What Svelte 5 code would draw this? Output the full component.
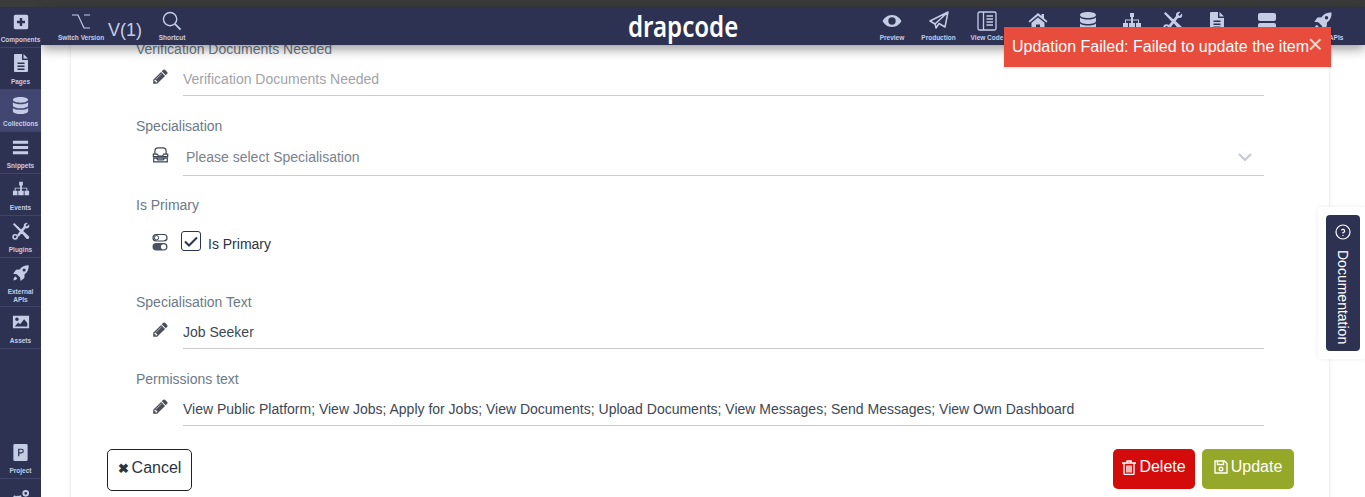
<script>
  const ic = {
    plus: 'M3 1h14a2 2 0 0 1 2 2v14a2 2 0 0 1-2 2H3a2 2 0 0 1-2-2V3a2 2 0 0 1 2-2zm5.500 4v3.500H5v3h3.500V15h3v-3.500H15v-3h-3.500V5z',
    file: 'M4 1h7v6h6v11a1 1 0 0 1-1 1H4a1 1 0 0 1-1-1V2a1 1 0 0 1 1-1zm8.500 0L17 5.500h-4.500zM6.500 9.500v1.500h7V9.500zm0 3v1.500h7v-1.500zm0 3V17h7v-1.500z',
    db: 'M10 1c4.500 0 8 1.300 8 3s-3.500 3-8 3-8-1.300-8-3 3.500-3 8-3zM2 6.500C3.500 8 6.500 8.600 10 8.600s6.500-.6 8-2.100V10c0 1.700-3.500 3-8 3s-8-1.300-8-3zm0 6C3.500 14 6.500 14.600 10 14.600s6.500-.6 8-2.100V16c0 1.700-3.500 3-8 3s-8-1.300-8-3z',
    bars: 'M2 3h16v3H2zm0 5.500h16v3H2zM2 14h16v3H2z',
    sitemap: 'M8 2h4v4h-1v2.500h6V12h2v5h-5v-5h2V9.500h-5V12h2v5H7v-5h2V9.500H4V12h2v5H1v-5h2V8.500h6V6H8z',
    tools: 'M1 2.500L2.500 1l9 8.500-2 2zM10.500 12l2-2 6.500 6q.5 1-.5 2.500-1.500 1-2.500 0zM5.500 14.500L13 5l2 2-7.500 9.500zM13 5q-.5-3 2-4 1.500-.5 2.500 0L15 3.500 16.500 5 19 2.500q.5 1.500 0 3-1 2-4 1.500zM.3 16.500a3.200 3.200 0 1 0 6.400 0a3.200 3.200 0 1 0-6.400 0zM2 16.500a1.500 1.500 0 1 1 3 0a1.500 1.500 0 1 1-3 0z',
    rocket: 'M18.500 1.500c.3 4-1 7.500-4.500 10l-.3 4L9.500 19l-.5-4-3.700-3.700-4-.5 3.200-4.300 4-.3c2.500-3.500 6-4.800 10-4.700zM13.500 5a1.700 1.700 0 1 0 0 3.400 1.700 1.700 0 0 0 0-3.400zM4 14c-1.500.5-2.200 1.800-2.300 4 2.200-.1 3.500-.8 4-2.300z',
    image: 'M1 3h18v14H1zm4.500 2a2 2 0 1 0 0 4 2 2 0 0 0 0-4zM3 15h14v-4l-3.500-4L9 12.500 7 10.500z',
    eye: 'M10 4c4.500 0 7.800 3 9.500 6-1.700 3-5 6-9.500 6S2.200 13 .5 10C2.200 7 5.500 4 10 4zm0 2.300a3.700 3.700 0 1 0 0 7.400 3.700 3.700 0 0 0 0-7.400z',
    home: 'M10 2l3.500 3V3H16v4.300l3.500 3-1.200 1.200L10 4.700l-8.300 6.800L.5 10.300zM10 6.500l6.500 5.300V18H12v-4.500H8V18H3.500v-6.200z',
    server: 'M3 2h14a2 2 0 0 1 2 2v4a2 2 0 0 1-2 2H3a2 2 0 0 1-2-2V4a2 2 0 0 1 2-2zm0 10h14a2 2 0 0 1 2 2v2a2 2 0 0 1-2 2H3a2 2 0 0 1-2-2v-2a2 2 0 0 1 2-2z',
    gears: 'M7 6l1.500.4 1-1 1.600 1-.4 1.400 1 1 1.400-.2.5 1.800-1.200.8v1.400l1.200.8-.5 1.800-1.400-.2-1 1 .4 1.400-1.600 1-1-1H6l-1 1-1.600-1 .4-1.400-1-1-1.400.2L0 13.600l1.200-.8v-1.400L0 10.600l.4-1.800 1.400.2 1-1-.4-1.400L4 5.600l1 1zm.3 4a2.200 2.200 0 1 0 0 4.400 2.200 2.200 0 0 0 0-4.400zM15.500 0a3.500 3.500 0 1 1 0 7 3.500 3.500 0 0 1 0-7zm0 2a1.500 1.500 0 1 0 0 3 1.500 1.500 0 0 0 0-3z'
  };
  const pencil = 'M491 1536l91-91-235-235-91 91v107h128v128h107zm523-928q0-22-22-22-10 0-17 7l-542 542q-7 7-7 17 0 22 22 22 10 0 17-7l542-542q7-7 7-17zm-54-192l416 416-832 832h-416v-416zm683 96q0 53-37 90l-166 166-416-416 166-165q36-38 90-38 53 0 91 38l235 234q37 39 37 91z';

  const side = [
    { label: 'Pages', icon: 'file', size: 20 },
    { label: 'Collections', icon: 'db', size: 19, on: true },
    { label: 'Snippets', icon: 'bars', size: 19 },
    { label: 'Events', icon: 'sitemap', size: 18 },
    { label: 'Plugins', icon: 'tools', size: 18 },
    { label: 'External APIs', icon: 'rocket', size: 18, tall: true },
    { label: 'Assets', icon: 'image', size: 18 }
  ];

  const topRight = [
    { label: 'Preview', icon: 'eye', w: 46 },
    { label: 'Production', icon: 'plane', w: 47 },
    { label: 'View Code', icon: 'book', w: 50 },
    { label: '', icon: 'home', w: 52 },
    { label: '', icon: 'db', w: 47 },
    { label: '', icon: 'sitemap', w: 42 },
    { label: '', icon: 'tools', w: 40 },
    { label: '', icon: 'file', w: 47 },
    { label: '', icon: 'server', w: 54 },
    { label: 'External APIs', icon: 'rocket', w: 57 }
  ];
</script>

<div class="page">
  <div class="chrome"></div>

  <div class="shell">
    <aside class="side">
      <div class="side-item first">
        <svg width="16" height="16" viewBox="0 0 20 20"><path d={ic.plus} /></svg>
        <span>Components</span>
      </div>
      {#each side as s}
        <div class="side-item" class:on={s.on} class:tall={s.tall}>
          <svg width={s.size} height={s.size} viewBox="0 0 20 20"><path d={ic[s.icon]} /></svg>
          <span>{s.label}</span>
        </div>
      {/each}
      <div class="side-spacer"></div>
      <div class="side-item">
        <svg width="19" height="19" viewBox="0 0 20 20"><path fill-rule="evenodd" d="M4 1h12a1.500 1.500 0 0 1 1.500 1.500v15A1.500 1.500 0 0 1 16 19H4a1.500 1.500 0 0 1-1.500-1.500v-15A1.500 1.500 0 0 1 4 1zm3.500 5v8h1.300v-3h2.200a2.500 2.500 0 0 0 0-5zm1.300 1.200H11a1.300 1.300 0 0 1 0 2.600H8.800z" /></svg>
        <span>Project</span>
      </div>
      <div class="side-item gears">
        <svg width="19" height="19" viewBox="0 0 20 20"><path d={ic.gears} /></svg>
      </div>
    </aside>

    <div class="right">
      <header class="top">
        <div class="top-left">
          <div class="top-item switch">
            <svg class="line" width="20" height="20" viewBox="0 0 20 20" stroke="#c5cde6" stroke-width="1.200"><path d="M1 4h6l6 13h6M13 4h6" /></svg>
            <span>Switch Version</span>
          </div>
          <div class="version">V(1)</div>
          <div class="top-item shortcut">
            <svg class="line" width="20" height="20" viewBox="0 0 21 21" stroke="#c5cde6" stroke-width="1.500"><circle cx="8.500" cy="8.500" r="7" /><path d="M13.500 13.500l6 6" stroke-width="2" /></svg>
            <span>Shortcut</span>
          </div>
        </div>

        <div class="logo">drapcode</div>

        <div class="top-right">
          {#each topRight as t}
            <div class="top-item" style="width:{t.w}px">
              {#if t.icon === 'plane'}
                <svg class="line" width="20" height="20" viewBox="0 0 20 20" stroke="#c5cde6" stroke-width="1.500" stroke-linejoin="round"><path d="M19 1L1 10l5 3L19 1l-3 15-6-3.500-3 4.500-1-5" /></svg>
              {:else if t.icon === 'book'}
                <svg class="line" width="20" height="20" viewBox="0 0 20 20" stroke="#c5cde6" stroke-width="1.300"><rect x="1" y="1" width="18" height="18" rx="1.500" /><path d="M6.500 1v18M9.500 5h6.500M9.500 8h6.500M9.500 11h6.500M9.500 14h6.500" /></svg>
              {:else}
                <svg width="20" height="20" viewBox="0 0 20 20"><path d={ic[t.icon]} /></svg>
              {/if}
              {#if t.label}<span>{t.label}</span>{/if}
            </div>
          {/each}
        </div>
      </header>

      <main class="main">
        <section class="card">
          <label class="field-label first-label">Verification Documents Needed</label>
          <div class="row">
            <svg class="field-icon" width="17" height="17" viewBox="0 0 1792 1792"><path d={pencil} /></svg>
            <div class="input placeholder">Verification Documents Needed</div>
          </div>

          <label class="field-label">Specialisation</label>
          <div class="row select-row">
            <svg class="field-icon box" width="17" height="16" viewBox="0 0 20 20" stroke="#3c4454" stroke-width="1.500"><path d="M3 9V5a4 4 0 0 1 4-4h6a4 4 0 0 1 4 4v4M1 9h5l1.500 2.500h5L14 9h5v3H1zM1.500 14h17v4.500h-17zM5 14l1.500 2h7l1.500-2" /></svg>
            <div class="input select">Please select Specialisation
              <svg width="14" height="8" viewBox="0 0 14 8" fill="none" stroke="#c4c8ce" stroke-width="2"><path d="M1 1l6 6 6-6" /></svg>
            </div>
          </div>

          <label class="field-label">Is Primary</label>
          <div class="row check-row">
            <svg class="field-icon" width="16" height="18" viewBox="0 0 16 18"><rect x="1" y="1.500" width="14" height="6.500" rx="3.250" fill="none" stroke="#3c4454" stroke-width="1.200" /><circle cx="4.500" cy="4.750" r="2.200" fill="none" stroke="#3c4454" stroke-width="1" /><rect x=".5" y="10" width="15" height="7.500" rx="3.750" fill="#4b5263" /><circle cx="11.500" cy="13.750" r="2.600" fill="#fff" /></svg>
            <span class="check">
              <svg width="14" height="11" viewBox="0 0 14 11" fill="none" stroke="#2d3253" stroke-width="2"><path d="M1 5.500l4 4 8-8" /></svg>
            </span>
            <span class="check-text">Is Primary</span>
          </div>

          <label class="field-label">Specialisation Text</label>
          <div class="row">
            <svg class="field-icon" width="17" height="17" viewBox="0 0 1792 1792"><path d={pencil} /></svg>
            <div class="input">Job Seeker</div>
          </div>

          <label class="field-label">Permissions text</label>
          <div class="row">
            <svg class="field-icon" width="17" height="17" viewBox="0 0 1792 1792"><path d={pencil} /></svg>
            <div class="input">View Public Platform; View Jobs; Apply for Jobs; View Documents; Upload Documents; View Messages; Send Messages; View Own Dashboard</div>
          </div>

          <div class="actions">
            <button class="cancel"><b>✖</b> Cancel</button>
            <div class="actions-right">
              <button class="delete">
                <svg width="14" height="15" viewBox="0 0 14 15" fill="none" stroke="#fff" stroke-width="1.400"><path d="M0 3h14M5 3V1h4v2M2 3v10.500a1 1 0 0 0 1 1h8a1 1 0 0 0 1-1V3M5 5.500v7M7 5.500v7M9 5.500v7" /></svg>
                Delete
              </button>
              <button class="update">
                <svg width="14" height="14" viewBox="0 0 14 14" fill="none" stroke="#fff" stroke-width="1.400"><path d="M1 1h9.500L13 3.500V13H1zM3.500 1v3.500h6V1" /><circle cx="7" cy="9" r="1.800" /></svg>
                Update
              </button>
            </div>
          </div>
        </section>
      </main>
    </div>
  </div>

  <div class="toast">
    <span>Updation Failed: Failed to update the item</span>
    <i>×</i>
  </div>

  <div class="doc-tab">
    <div class="doc-inner">
      <svg width="16" height="16" viewBox="0 0 16 16" fill="none" stroke="#fff" stroke-width="1.200"><circle cx="8" cy="8" r="7" /><path d="M6.500 6.300A1.600 1.600 0 1 1 8 8.500v1M8 11v1" /></svg>
      <span>Documentation</span>
    </div>
  </div>
</div>

<style>
  :global(body) {
    margin: 0;
    font-family: "Liberation Sans", Arial, sans-serif;
  }
  .page {
    position: relative;
    width: 1365px;
    height: 497px;
    overflow: hidden;
    background: #fff;
    display: flex;
    flex-direction: column;
  }
  .chrome {
    height: 7px;
    background: #3b3b3b;
    flex: none;
  }
  .shell {
    display: flex;
    flex: 1;
    min-height: 0;
  }
  .side {
    width: 41px;
    flex: none;
    background: #2d3253;
    display: flex;
    flex-direction: column;
    overflow: hidden;
    z-index: 3;
  }
  .side-item {
    height: 42px;
    flex: none;
    box-sizing: border-box;
    border-bottom: 1px solid #3e4569;
    display: grid;
    grid-template-rows: 30px auto;
    justify-items: center;
    align-items: center;
    align-content: start;
  }
  .side-item.first {
    height: 41px;
    grid-template-rows: 29px auto;
  }
  .side-item.tall {
    height: 49px;
  }
  .side-item.on {
    background: #414770;
  }
  .side-item.gears {
    border-bottom: 0;
    padding-top: 5px;
  }
  .side-item svg,
  .top-item svg {
    fill: #c5cde6;
    flex: none;
  }
  .top-item svg.line {
    fill: none;
  }
  .side-item span {
    font-size: 6.500px;
    line-height: 8px;
    font-weight: 700;
    color: #c5cde6;
    text-align: center;
  }
  .side-spacer {
    height: 88px;
    flex: none;
  }
  .right {
    flex: 1;
    min-width: 0;
    display: flex;
    flex-direction: column;
  }
  .top {
    height: 38px;
    flex: none;
    background: #2d3253;
    display: flex;
    position: relative;
    z-index: 2;
    box-shadow: 0 4px 12px rgba(0, 0, 0, 0.4);
  }
  .top-left {
    display: flex;
    width: 300px;
    padding-left: 17px;
    box-sizing: border-box;
  }
  .top-item {
    display: flex;
    flex-direction: column;
    align-items: center;
    padding-top: 4px;
    gap: 3px;
    box-sizing: border-box;
    white-space: nowrap;
    justify-content: flex-start;
  }
  .top-item span {
    font-size: 6.500px;
    line-height: 8px;
    font-weight: 700;
    color: #c5cde6;
  }
  .switch {
    width: 46px;
  }
  .version {
    font-size: 18px;
    color: #c5cde6;
    line-height: 46px;
    margin-left: 4px;
    height: 38px;
  }
  .shortcut {
    width: 32px;
    margin-left: 14px;
  }
  .logo {
    width: 110px;
    margin-left: 287px;
    color: #fff;
    font-family: "Noto Sans", sans-serif;
    font-size: 29px;
    font-weight: 600;
    line-height: 38px;
    white-space: nowrap;
    transform: scaleX(0.83);
    transform-origin: left center;
  }
  .top-right {
    display: flex;
    margin-left: 131px;
  }
  .main {
    flex: 1;
    min-height: 0;
    overflow: hidden;
    padding: 0 35px 0 29px;
  }
  .card {
    box-sizing: border-box;
    height: 470px;
    border: 1px solid #f1f1f1;
    border-width: 0 1px;
    box-shadow: 0 0 4px rgba(0, 0, 0, 0.05);
    padding: 0 35px 0 65px;
    position: relative;
  }
  .field-label {
    display: block;
    font-size: 14px;
    line-height: 16px;
    color: #6c7a89;
    margin-top: 22px;
  }
  .first-label {
    margin-top: -4px;
  }
  .row {
    display: flex;
    align-items: flex-start;
    padding-left: 16px;
    margin-top: 6px;
    padding-right: 30px;
  }
  .select-row {
    margin-bottom: -1px;
  }
  .field-icon {
    flex: none;
    fill: #4b4f58;
    margin-top: 5px;
    margin-right: 14px;
  }
  .field-icon.box {
    fill: none;
    margin-top: 7px;
  }
  .input {
    flex: 1;
    min-width: 0;
    height: 33px;
    box-sizing: border-box;
    border-bottom: 1px solid #ccc;
    font-size: 14px;
    line-height: 20px;
    padding-top: 6px;
    color: #3d4754;
    white-space: nowrap;
  }
  .placeholder {
    color: #a0a3a8;
  }
  .select {
    color: #79828d;
    padding: 0 12px 2px 3px;
    display: flex;
    justify-content: space-between;
    align-items: center;
    height: 36px;
  }
  .check-row {
    height: 41px;
    margin-top: 18px;
  }
  .check-row .field-icon {
    margin-top: 2px;
    margin-right: 13px;
  }
  .check {
    width: 20px;
    height: 20px;
    box-sizing: border-box;
    border: 1.500px solid #2d3253;
    border-radius: 3px;
    display: flex;
    align-items: center;
    justify-content: center;
    flex: none;
  }
  .check-text {
    font-size: 14px;
    line-height: 16px;
    color: #2c3440;
    margin-left: 7px;
    margin-top: 5px;
  }
  .actions {
    display: flex;
    justify-content: space-between;
    align-items: flex-start;
    margin-top: 23px;
    margin-left: -29px;
  }
  .actions-right {
    display: flex;
    gap: 7px;
  }
  button {
    font-family: inherit;
    font-size: 16px;
    border-radius: 5px;
    box-sizing: border-box;
    display: flex;
    align-items: center;
    justify-content: center;
    padding: 0 0 4px;
    gap: 3px;
  }
  .cancel {
    width: 85px;
    height: 42px;
    background: #fff;
    border: 1px solid #222;
    color: #2c3440;
  }
  .cancel b {
    font-size: 13px;
  }
  .delete {
    width: 82px;
    height: 40px;
    background: #d40b0b;
    border: 0;
    color: #fff;
  }
  .update {
    width: 92px;
    height: 40px;
    background: #95a82a;
    border: 0;
    color: #fff;
  }
  .toast {
    position: absolute;
    left: 1004px;
    top: 27px;
    width: 327px;
    height: 40px;
    box-sizing: border-box;
    padding-left: 8px;
    background: #e74c3c;
    color: #fff;
    font-size: 16px;
    line-height: 39px;
    z-index: 5;
    white-space: nowrap;
    box-shadow: 0 1px 2px rgba(0, 0, 0, 0.15);
  }
  .toast i {
    position: absolute;
    right: 8px;
    top: -1px;
    font-style: normal;
    font-size: 26px;
    line-height: 36px;
    color: #f7d4cf;
  }
  .doc-tab {
    position: absolute;
    left: 1318px;
    top: 207px;
    width: 47px;
    height: 152px;
    box-sizing: border-box;
    padding: 8px 5px 8px 8px;
    background: #fff;
    border-radius: 3px 0 0 3px;
    box-shadow: 0 0 4px rgba(0, 0, 0, 0.08);
    z-index: 4;
  }
  .doc-inner {
    height: 100%;
    background: #2d3253;
    border-radius: 4px;
    display: flex;
    flex-direction: column;
    align-items: center;
    padding-top: 9px;
    box-sizing: border-box;
    gap: 10px;
  }
  .doc-inner span {
    writing-mode: vertical-rl;
    color: #fff;
    font-size: 14px;
    line-height: 16px;
  }
</style>
